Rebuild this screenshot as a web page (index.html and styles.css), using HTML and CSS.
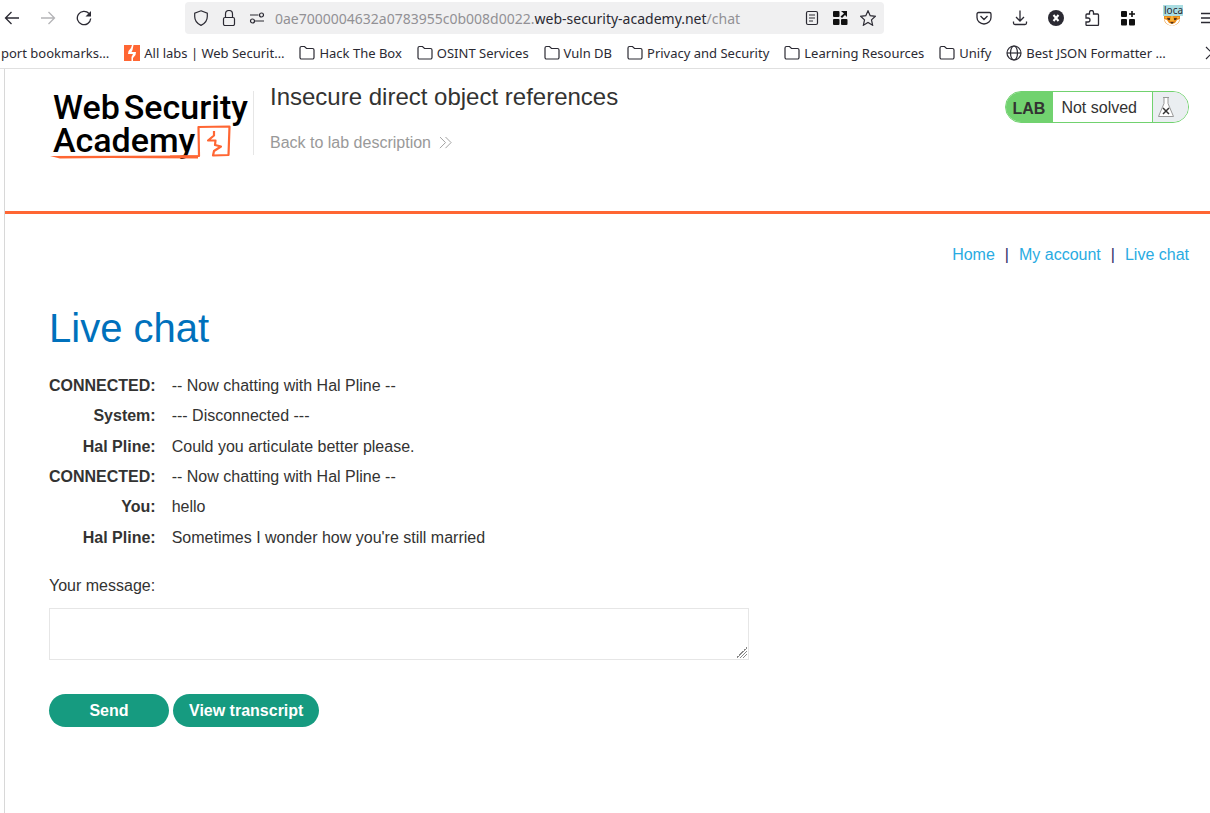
FILE: index.html
```html
<!DOCTYPE html>
<html lang="en">
<head>
<meta charset="utf-8">
<title>Insecure direct object references</title>
<link rel="stylesheet" href="styles.css">
</head>
<body>
<header class="browser">
  <div class="toolbar">
    <div class="history">
      <button class="tool" aria-label="Back"><svg viewBox="0 0 16 16"><path d="M15 8H1.5M7.500 2L1.500 8l6 6"/></svg></button>
      <button class="tool disabled" aria-label="Forward"><svg viewBox="0 0 16 16"><path d="M1 8h13.500M8.500 2l6 6-6 6"/></svg></button>
      <button class="tool" aria-label="Reload"><svg viewBox="0 0 16 16"><path d="M13 3.500A6.700 6.700 0 1 0 14.700 8.500"/><path class="fill" d="M15 1v5.500H9.500z"/></svg></button>
    </div>
    <div class="address">
      <svg class="icon" viewBox="0 0 16 16"><path d="M8 .8l6.300 2.300v3.400c0 4-2.600 7.200-6.300 8.900-3.700-1.700-6.300-4.900-6.300-8.900V3.100z"/></svg>
      <svg class="icon" viewBox="0 0 16 16"><rect x="2.500" y="7.500" width="11" height="8" rx="1.500"/><path d="M4.500 7.500V4a3.500 3.500 0 0 1 7 0v3.500"/></svg>
      <svg class="icon" viewBox="0 0 16 16"><path d="M1 5h8.500M6 11h9"/><circle cx="12.500" cy="5" r="2"/><circle cx="3.500" cy="11" r="2"/></svg>
      <div class="url">0ae7000004632a0783955c0b008d0022.<strong>web-security-academy.net</strong>/chat</div>
      <svg class="icon" viewBox="0 0 16 16"><rect x="2.500" y="1.500" width="11" height="13" rx="1.500"/><path d="M5 5h6M5 8h6M5 11h4"/></svg>
      <svg class="icon solid" viewBox="0 0 16 16"><rect x="1" y="1" width="6.500" height="6" rx="1"/><rect x="1" y="9" width="6.500" height="6" rx="1"/><rect x="9" y="9" width="6.500" height="6" rx="1"/><path d="M9 1h6v6l-2-2-3 3-1.500-1.500L12 3.500z"/></svg>
      <svg class="icon" viewBox="0 0 16 16"><path d="M8 .8l2.200 4.900 5.200.6-3.900 3.600 1.100 5.300L8 12.500l-4.600 2.700 1.100-5.300L.6 6.300l5.200-.6z"/></svg>
    </div>
    <div class="extensions">
      <button class="tool" aria-label="Save to Pocket"><svg viewBox="0 0 16 16"><path d="M2.500 2.500h11a1.500 1.500 0 0 1 1.500 1.500v3.500a7 6.500 0 0 1-14 0V4a1.500 1.500 0 0 1 1.500-1.500zM4.500 6L8 9.500 11.500 6"/></svg></button>
      <button class="tool" aria-label="Downloads"><svg viewBox="0 0 16 16"><path d="M8 .5V11M4 7l4 4 4-4M1.500 11.500V13A1.500 1.500 0 0 0 3 14.500h10a1.500 1.500 0 0 0 1.500-1.500v-1.500"/></svg></button>
      <button class="tool" aria-label="X extension"><svg viewBox="0 0 16 16"><circle class="disc" cx="8" cy="8" r="8"/><path class="cross" d="M5.500 5l5 6M10.500 5l-5 6"/></svg></button>
      <button class="tool" aria-label="Extensions"><svg viewBox="0 0 16 16"><path d="M5.500 4V2.500a2 2 0 0 1 4 0V4h4a1 1 0 0 1 1 1v9.500a1 1 0 0 1-1 1H3a1 1 0 0 1-1-1V12h2a2 2 0 0 0 0-4H2V5a1 1 0 0 1 1-1z"/></svg></button>
      <button class="tool" aria-label="Extension grid"><svg class="solid" viewBox="0 0 16 16"><rect x="1" y="1" width="6" height="6" rx="1"/><rect x="1" y="9" width="6" height="6.500" rx="1"/><rect x="9" y="9" width="6" height="6.500" rx="1"/><path d="M11.200 1h1.600v2.200H15v1.600h-2.200V7h-1.600V4.800H9V3.200h2.200z"/></svg></button>
      <button class="tool proxy" aria-label="Proxy: local"><svg class="fox" viewBox="0 0 16 16"><path fill="#e88b1a" d="M0 1h16v7c0 5-3 7-8 8-5-1-8-3-8-8z"/><path fill="#fff" d="M0 9l3 1 2 3 3 1 3-1 2-3 3-1-2 4-3 2-3 1-3-1-3-2z"/><path fill="#523218" d="M3 8h3v2H4zM10 8h3l-1 2h-2zM6 12h4l-2 2z"/><path fill="#f7b437" d="M7 6h2l1 5H6zM1 7h2v1H1zM13 7h2v1h-2z"/></svg><span class="badge">loca</span></button>
      <button class="tool" aria-label="Menu"><svg viewBox="0 0 16 16"><path d="M1 3.500h14M1 8h14M1 12.500h14"/></svg></button>
    </div>
  </div>
  <nav class="bookmarks" aria-label="Bookmarks">
    <a href="#">port bookmarks…</a>
    <a href="#"><svg class="brand" viewBox="0 0 16 16"><rect width="16" height="16" fill="#ff6633"/><path fill="#fff" d="M8 0h1.500L8.500 5l-1 2H12l-.5 3L9 13v3H7.500v-4L9 9H4l.5-3L7 3z"/></svg>All labs | Web Securit…</a>
    <a href="#"><svg class="icon" viewBox="0 0 16 16"><path d="M1 3a1.500 1.500 0 0 1 1.500-1.500h3l2 2h6A1.500 1.500 0 0 1 15 5v7.500a1.500 1.500 0 0 1-1.500 1.500h-11A1.500 1.500 0 0 1 1 12.500z"/></svg>Hack The Box</a>
    <a href="#"><svg class="icon" viewBox="0 0 16 16"><path d="M1 3a1.500 1.500 0 0 1 1.500-1.500h3l2 2h6A1.500 1.500 0 0 1 15 5v7.500a1.500 1.500 0 0 1-1.500 1.500h-11A1.500 1.500 0 0 1 1 12.500z"/></svg>OSINT Services</a>
    <a href="#"><svg class="icon" viewBox="0 0 16 16"><path d="M1 3a1.500 1.500 0 0 1 1.500-1.500h3l2 2h6A1.500 1.500 0 0 1 15 5v7.500a1.500 1.500 0 0 1-1.500 1.500h-11A1.500 1.500 0 0 1 1 12.500z"/></svg>Vuln DB</a>
    <a href="#"><svg class="icon" viewBox="0 0 16 16"><path d="M1 3a1.500 1.500 0 0 1 1.500-1.500h3l2 2h6A1.500 1.500 0 0 1 15 5v7.500a1.500 1.500 0 0 1-1.500 1.500h-11A1.500 1.500 0 0 1 1 12.500z"/></svg>Privacy and Security</a>
    <a href="#"><svg class="icon" viewBox="0 0 16 16"><path d="M1 3a1.500 1.500 0 0 1 1.500-1.500h3l2 2h6A1.500 1.500 0 0 1 15 5v7.500a1.500 1.500 0 0 1-1.500 1.500h-11A1.500 1.500 0 0 1 1 12.500z"/></svg>Learning Resources</a>
    <a href="#"><svg class="icon" viewBox="0 0 16 16"><path d="M1 3a1.500 1.500 0 0 1 1.500-1.500h3l2 2h6A1.500 1.500 0 0 1 15 5v7.500a1.500 1.500 0 0 1-1.500 1.500h-11A1.500 1.500 0 0 1 1 12.500z"/></svg>Unify</a>
    <a href="#"><svg class="icon" viewBox="0 0 16 16"><circle cx="8" cy="8" r="7"/><ellipse cx="8" cy="8" rx="3.500" ry="7"/><path d="M1 8h14"/></svg>Best JSON Formatter …</a>
    <button class="more" aria-label="More bookmarks"><svg class="icon" viewBox="0 0 16 16"><path d="M6 2l6 6-6 6"/></svg></button>
  </nav>
</header>
<div class="page">
  <header class="lab-header">
    <a class="logo" href="#" aria-label="Web Security Academy">
      <span class="logo-line"><span>Web</span><span>Security</span></span>
      <span class="logo-line">Academy</span>
      <svg class="logo-mark" viewBox="0 0 184 36"><path fill="#ff6633" d="M0 31L148 30.500V33.500L60 33 10 33.500z"/><path fill="none" stroke="#ff6633" stroke-width="2.200" stroke-linejoin="round" d="M120 31.500L149 31 148.500 2 179.500 1.500 178.500 30 163 30.500 164 26 171 21.500 165 20 165.500 15.500 158 15.500 164 10.500 164 6"/></svg>
    </a>
    <div class="lab-title">
      <h2>Insecure direct object references</h2>
      <a href="#">Back to lab description <svg viewBox="0 0 14 14"><path d="M1 0l6 6-6 6M7 0l6 6-6 6"/></svg></a>
    </div>
    <div class="status">
      <span class="status-tag">LAB</span>
      <span class="status-text">Not solved</span>
      <span class="status-icon"><svg viewBox="0 0 18 20"><path fill="#fff" stroke="#999" d="M6 .500h6M7 .500v6L1.500 19.500h15L11 6.500v-6"/><path fill="none" stroke="#333" stroke-width="1.500" d="M6 11l6 6M12 11l-6 6"/></svg></span>
    </div>
  </header>
  <main>
    <nav class="account" aria-label="Lab">
      <a href="#">Home</a><span>|</span><a href="#">My account</a><span>|</span><a href="#">Live chat</a>
    </nav>
    <h1>Live chat</h1>
    <table class="chat">
      <tr><th scope="row">CONNECTED:</th><td>-- Now chatting with Hal Pline --</td></tr>
      <tr><th scope="row">System:</th><td>--- Disconnected ---</td></tr>
      <tr><th scope="row">Hal Pline:</th><td>Could you articulate better please.</td></tr>
      <tr><th scope="row">CONNECTED:</th><td>-- Now chatting with Hal Pline --</td></tr>
      <tr><th scope="row">You:</th><td>hello</td></tr>
      <tr><th scope="row">Hal Pline:</th><td>Sometimes I wonder how you're still married</td></tr>
    </table>
    <form class="message">
      <label for="message">Your message:</label>
      <textarea id="message"></textarea>
      <div class="actions">
        <button type="button" class="send">Send</button>
        <button type="button">View transcript</button>
      </div>
    </form>
  </main>
</div>
</body>
</html>
```
FILE: styles.css
```css
* { box-sizing: border-box; }
body {
  margin: 0;
  min-height: 100vh;
  display: flex;
  flex-direction: column;
  overflow-x: hidden;
  background: #fff;
  color: #333332;
  font: 16px/20px "Liberation Sans", Arial, sans-serif;
}
a { text-decoration: none; }
button { border: 0; background: none; padding: 0; font: inherit; color: inherit; }
svg { display: block; flex: none; fill: none; stroke: currentColor; }

.browser { color: #2b2a33; font-family: "Noto Sans", sans-serif; border-bottom: 1px solid #e0e0e0; overflow: hidden; }
.toolbar { display: flex; align-items: center; height: 36px; padding-left: 4px; }
.history { display: flex; gap: 20px; width: 181px; }
.tool { flex: none; width: 16px; height: 16px; }
.tool svg { width: 16px; height: 16px; stroke-width: 1.3; }
.tool .fill { fill: currentColor; stroke: none; }
.disabled { color: #b4b4b7; }
.address { flex: 1; display: flex; align-items: center; gap: 12px; height: 32px; padding: 0 8px; background: #f0f0f1; border-radius: 4px; }
.icon { width: 16px; height: 16px; stroke-width: 1.2; }
.url { flex: 1; min-width: 0; margin-left: -2px; padding-top: 1px; white-space: nowrap; overflow: hidden; font-size: 14px; color: #929195; }
.url strong { font-weight: 400; color: #2b2a33; }
.solid { fill: #111; stroke: none; }
.extensions { display: flex; gap: 20px; width: 326px; padding-left: 92px; }
.tool .solid, .tool .fox { stroke: none; }
.disc { fill: #2b2a33; stroke: none; }
.cross { stroke: #fff; stroke-width: 2; }
.proxy { position: relative; margin-left: 8px; }
.badge { position: absolute; top: -5px; left: -1px; width: 20px; height: 11px; overflow: hidden; padding-left: 1px; background: #aadde2; font-size: 10px; line-height: 11px; text-align: left; }

.bookmarks { display: flex; align-items: center; gap: 15px; height: 32px; padding: 1px 0 0 1px; font-size: 13px; white-space: nowrap; }
.bookmarks a { display: flex; align-items: center; gap: 4px; color: inherit; }
.brand { width: 16px; height: 16px; stroke: none; }
.more { flex: none; margin-left: auto; margin-right: -6px; }

.page { flex: 1; margin-left: 4px; border-left: 1px solid #d8d8d8; }
.lab-header { display: flex; align-items: flex-start; height: 145px; padding: 20px 21px 0 48px; border-bottom: 3px solid #ff6633; }
.logo { position: relative; width: 201px; height: 64px; margin-top: 2px; border-right: 1px solid #e6e6e6; color: #000; font: 500 34px/33px Roboto, sans-serif; }
.logo-line { display: flex; gap: 4px; height: 33px; }
.logo-mark { position: absolute; left: -3px; top: 34px; width: 184px; height: 36px; stroke: none; }
.lab-title { flex: 1; margin-left: 16px; }
.lab-title h2 { margin: 0; font-size: 24px; font-weight: 400; line-height: 16px; }
.lab-title a { display: flex; align-items: center; gap: 8px; margin-top: 28px; color: #999; }
.lab-title svg { width: 13px; height: 13px; }
.status { display: flex; height: 32px; margin-top: 2px; border: 1px solid #71d26f; border-radius: 16px; overflow: hidden; line-height: 31px; }
.status-tag { padding: 0 8px 0 7px; background: #71d26f; font-weight: 700; line-height: 33px; }
.status-text { padding: 0 15px 0 8px; border-right: 1px solid #71d26f; }
.status-icon { display: flex; align-items: center; width: 35px; padding-left: 4px; background: #eaeef1; }
.status-icon svg { width: 18px; height: 20px; }

main { padding: 31px 21px 20px 44px; }
.account { display: flex; justify-content: flex-end; gap: 10px; color: #2c2c68; }
.account a { color: #29abe2; }
h1 { margin: 39px 0 0; font-size: 40px; font-weight: 400; line-height: 48px; color: #0071bc; }
.chat { height: 182px; margin-top: 19px; border-collapse: collapse; }
.chat th, .chat td { padding: 0; text-align: left; }
.chat th { padding-right: 16px; text-align: right; }
.message { display: flex; flex-direction: column; margin-top: 23px; }
textarea { width: 100%; max-width: 700px; height: 52px; margin-top: 12px; padding: 8px; border: 1px solid #e6e6e6; outline: 0; font: inherit; resize: both; }
textarea::-webkit-resizer { background: linear-gradient(135deg, transparent 50%, #888 50% 56%, transparent 56% 65%, #888 65% 71%, transparent 71% 80%, #888 80% 86%, transparent 86%) 3px 3px / 11px 11px no-repeat; }
.actions { display: flex; gap: 4px; margin-top: 34px; }
.actions button { height: 33px; padding: 0 16px; border-radius: 17px; background: #169b80; color: #fff; font-weight: 700; }
.actions .send { width: 120px; }
```
